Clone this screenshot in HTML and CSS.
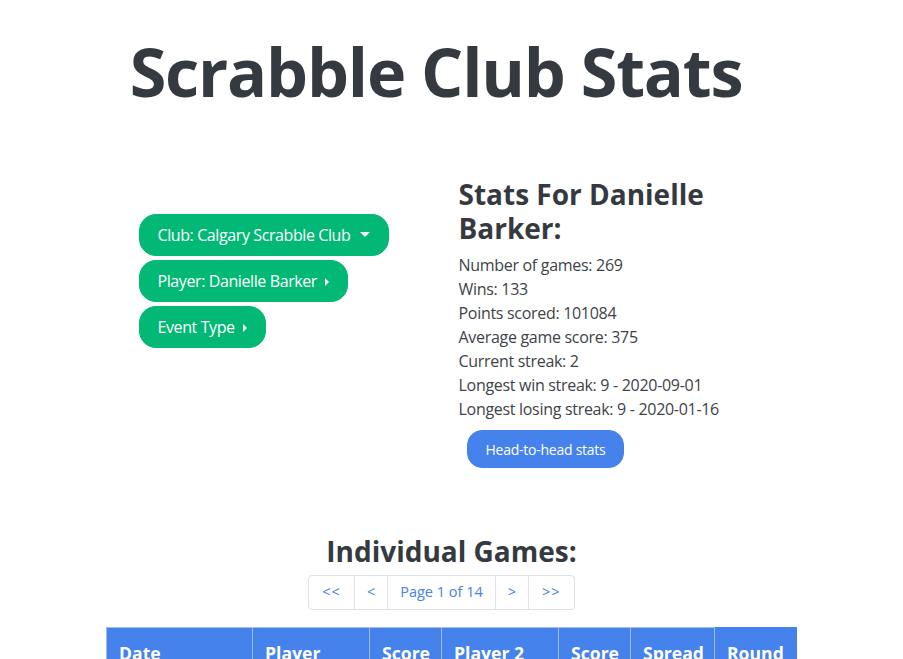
FILE: index.html
```html
<!DOCTYPE html>
<html lang="en">
<head>
<meta charset="utf-8">
<title>Scrabble Club Stats</title>
<link rel="stylesheet" href="styles.css">
</head>
<body>
<div class="container">
  <header class="hero">
    <h1 class="title">Scrabble Club Stats</h1>
  </header>

  <div class="row">
    <div class="filters">
      <button class="btn btn-success">Club: Calgary Scrabble Club<span class="caret-down"></span></button>
      <button class="btn btn-success">Player: Danielle Barker<span class="caret-right"></span></button>
      <button class="btn btn-success">Event Type<span class="caret-right"></span></button>
    </div>
    <div class="stats">
      <h2 class="stats-title">Stats For Danielle Barker:</h2>
      <div class="stats-list">
        <div>Number of games: 269</div>
        <div>Wins: 133</div>
        <div>Points scored: 101084</div>
        <div>Average game score: 375</div>
        <div>Current streak: 2</div>
        <div>Longest win streak: 9 - 2020-09-01</div>
        <div>Longest losing streak: 9 - 2020-01-16</div>
      </div>
      <button class="btn btn-primary btn-h2h">Head-to-head stats</button>
    </div>
  </div>

  <section class="games">
    <h3 class="games-title">Individual Games:</h3>
    <nav class="pager">
      <a class="page-item" href="#">&lt;&lt;</a>
      <a class="page-item" href="#">&lt;</a>
      <a class="page-item" href="#">Page 1 of 14</a>
      <a class="page-item" href="#">&gt;</a>
      <a class="page-item" href="#">&gt;&gt;</a>
    </nav>
    <table class="games-table">
      <thead>
        <tr>
          <th class="c-date">Date</th>
          <th class="c-player">Player</th>
          <th class="c-score">Score</th>
          <th class="c-player">Player 2</th>
          <th class="c-score">Score</th>
          <th class="c-spread">Spread</th>
          <th class="c-round">Round</th>
        </tr>
      </thead>
      <tbody></tbody>
    </table>
  </section>
</div>
</body>
</html>
```

FILE: styles.css
```css
html { scrollbar-width: none; }
html::-webkit-scrollbar { display: none; }

body {
  margin: 0;
  background: #fff;
  color: #343a40;
  font-family: "Segoe UI", "Open Sans", "Noto Sans", sans-serif;
  font-size: 16px;
  line-height: 1.5;
}

.container {
  width: 690px;
  margin: 0 auto;
}

.hero {
  padding-top: 28px;
}

.title {
  margin: 0;
  padding-right: 31px;
  text-align: center;
  white-space: nowrap;
  font-size: 66.5px;
  line-height: 86px;
  letter-spacing: -1.2px;
  font-weight: 700;
  color: #343a40;
}

.row {
  display: flex;
  margin-top: 64px;
}

.filters {
  width: 352px;
  box-sizing: border-box;
  padding: 36px 0 0 32px;
  display: flex;
  flex-direction: column;
  align-items: flex-start;
  gap: 4px;
}

.btn {
  font-family: inherit;
  border: 1px solid transparent;
  border-radius: 17px;
  color: #fff;
  cursor: pointer;
}

.btn-success {
  background: #02b875;
  border-color: #02b875;
  font-size: 16px;
  line-height: 24px;
  letter-spacing: -0.4px;
  padding: 8px 18px 8px 18px;
}

.caret-down {
  display: inline-block;
  margin-left: 10px;
  vertical-align: 4px;
  border-top: 5px solid #fff;
  border-left: 5px solid transparent;
  border-right: 5px solid transparent;
}

.caret-right {
  display: inline-block;
  margin-left: 8px;
  vertical-align: 1px;
  border-left: 4px solid #fff;
  border-top: 4px solid transparent;
  border-bottom: 4px solid transparent;
}

.stats {
  flex: 1;
}

.stats-title {
  margin: 0 0 8px;
  font-size: 28px;
  line-height: 1.2;
  font-weight: 700;
  color: #343a40;
}

.stats-list {
  color: #3d4349;
  letter-spacing: -0.3px;
}

.btn-primary {
  background: #4582ec;
  border-color: #4582ec;
}

.btn-h2h {
  margin: 9px 0 0 8px;
  font-size: 14px;
  line-height: 21px;
  letter-spacing: -0.25px;
  padding: 7.5px 18px;
  border-radius: 15px;
}

.games {
  margin-top: 67px;
  display: flex;
  flex-direction: column;
  align-items: center;
}

.games-title {
  margin: 0 0 6px;
  font-size: 28px;
  line-height: 1.2;
  font-weight: 700;
  color: #343a40;
}

.pager {
  display: flex;
  margin: 0 20px 17px 0;
}

.page-item {
  display: block;
  padding: 7.5px 12px;
  font-size: 14.5px;
  line-height: 18px;
  color: #4582ec;
  text-decoration: none;
  border: 1px solid #dee2e6;
  margin-left: -1px;
}

.page-item:first-child {
  margin-left: 0;
  border-radius: 4px 0 0 4px;
  padding-left: 13px;
  padding-right: 13px;
  letter-spacing: 1px;
}

.page-item:last-child {
  border-radius: 0 4px 4px 0;
  padding-left: 13px;
  padding-right: 13px;
  letter-spacing: 1px;
}

.games-table {
  width: 690px;
  border-collapse: collapse;
  table-layout: fixed;
}

.games-table th {
  box-sizing: border-box;
  background: #4582ec;
  color: #fff;
  text-align: left;
  font-size: 17.6px;
  line-height: 1.5;
  font-weight: 700;
  padding: 12px;
  border: 1px solid #9fbcf0;
  border-bottom: none;
}

.games-table th.c-round {
  border-top-color: #4582ec;
  border-right-color: #4582ec;
}

.c-date { width: 146px; }
.c-player { width: 117px; }
.c-score { width: 72px; }
.c-spread { width: 84px; }
.c-round { width: 82px; }
```
